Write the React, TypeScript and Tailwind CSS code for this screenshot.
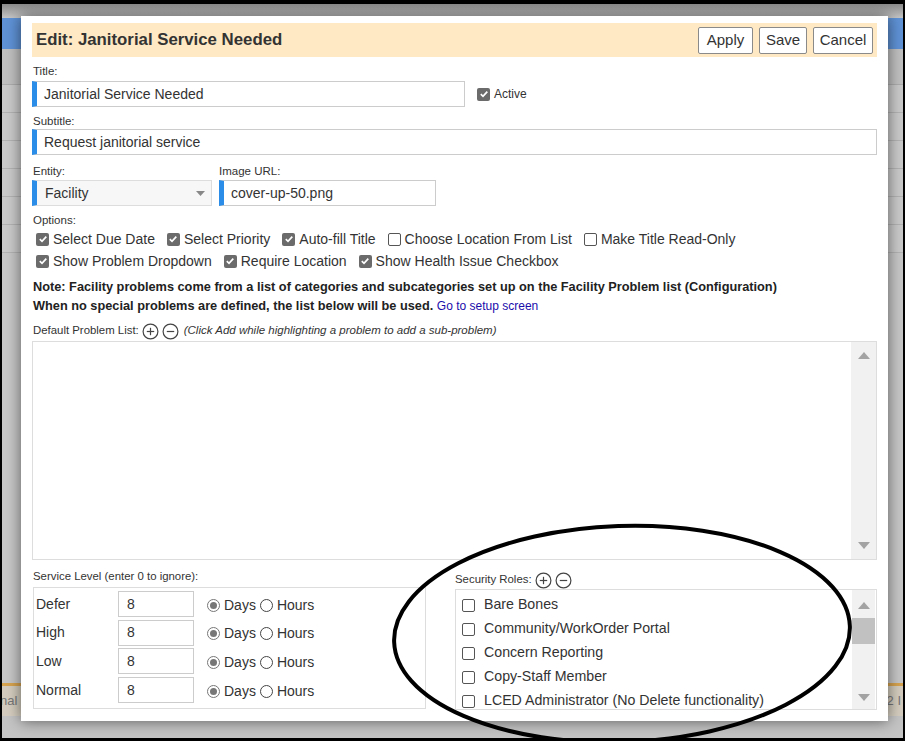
import React from "react";

const font = { fontFamily: '"Liberation Sans", Arial, sans-serif' };

const Check = ({ on }: { on: boolean }) =>
  on ? (
    <span className="inline-flex items-center justify-center w-[13px] h-[13px] rounded-[2px] bg-[#6b6b6b] shrink-0">
      <svg width="10" height="10" viewBox="0 0 10 10">
        <path d="M1.8 5.2 L4 7.3 L8.3 2.6" fill="none" stroke="#fff" strokeWidth="1.7" />
      </svg>
    </span>
  ) : (
    <span className="inline-block w-[13px] h-[13px] rounded-[2px] border border-[#555] bg-white shrink-0" />
  );

const Radio = ({ on }: { on: boolean }) =>
  on ? (
    <span className="inline-flex items-center justify-center w-[13px] h-[13px] rounded-full border border-[#777] bg-white shrink-0">
      <span className="w-[7px] h-[7px] rounded-full bg-[#777]" />
    </span>
  ) : (
    <span className="inline-block w-[13px] h-[13px] rounded-full border border-[#444] bg-white shrink-0" />
  );

const CircleIcon = ({ plus }: { plus: boolean }) => (
  <svg width="17" height="17" viewBox="0 0 17 17" className="shrink-0">
    <circle cx="8.5" cy="8.5" r="7.4" fill="none" stroke="#444" strokeWidth="1.2" />
    <path d="M4.8 8.5 H12.2" stroke="#444" strokeWidth="1.2" />
    {plus && <path d="M8.5 4.8 V12.2" stroke="#444" strokeWidth="1.2" />}
  </svg>
);

const Tri = ({ up }: { up: boolean }) => (
  <svg width="12" height="7" viewBox="0 0 12 7">
    <path d={up ? "M0 7 L6 0 L12 7 Z" : "M0 0 L12 0 L6 7 Z"} fill="#a3a3a3" />
  </svg>
);

const Opt = ({ on, label }: { on: boolean; label: string }) => (
  <label className="flex items-center gap-[4px] text-[14px] text-[#333]">
    <Check on={on} />
    <span>{label}</span>
  </label>
);

const levels = ["Defer", "High", "Low", "Normal"];
const roles = [
  "Bare Bones",
  "Community/WorkOrder Portal",
  "Concern Reporting",
  "Copy-Staff Member",
  "LCED Administrator (No Delete functionality)",
];

export default function App() {
  return (
    <div
      className="relative w-[905px] h-[741px] overflow-hidden border-black border-x-[2px] border-t-[4px] border-b-[3px] bg-[#c7c7c7]"
      style={font}
    >
      {/* greyed page behind */}
      <div className="flex flex-col h-full">
        <div className="h-[14px] bg-gradient-to-b from-[#8a8a8a] to-[#c6c6c6]" />
        <div className="h-[31px] bg-[#5f92d6]" />
        <div className="h-[36px] bg-[#c0c0c0] border-b border-[#adadad]" />
        {[0, 1, 2, 3, 4, 5].map((i) => (
          <div key={i} className="h-[28px] bg-[#cacaca] border-b border-[#b3b3b3]" />
        ))}
        <div className="flex-1" />
        <div className="h-[3px] bg-[#d7a450]" />
        <div className="h-[30px] bg-[#d4cdbf] flex items-center justify-between text-[13px] text-[#777]">
          <span className="-ml-[2px]">nal</span>
          <span className="mr-[2px]">22 I</span>
        </div>
        <div className="h-[22px] bg-[#c4c4c4]" />
      </div>

      {/* modal */}
      <div className="absolute left-[19px] top-[12px] w-[867px] h-[705px] bg-white shadow-[0_0_14px_rgba(0,0,0,0.55)] px-[11px] pt-[7px] text-[#333]">
        <div className="h-[34px] bg-[#fee9c4] flex items-center justify-between pl-[4px] pr-[4px]">
          <h1 className="text-[16.8px] font-bold text-[#333]">Edit: Janitorial Service Needed</h1>
          <div className="flex gap-[6px]">
            <button className="h-[27px] w-[55px] border border-[#8a8a8a] rounded-[2px] bg-white text-[15px] text-[#333]">Apply</button>
            <button className="h-[27px] w-[48px] border border-[#8a8a8a] rounded-[2px] bg-white text-[15px] text-[#333]">Save</button>
            <button className="h-[27px] w-[60px] border border-[#8a8a8a] rounded-[2px] bg-white text-[15px] text-[#333]">Cancel</button>
          </div>
        </div>

        <div className="text-[11.5px] mt-[7px] leading-[14px] pl-[1px]">Title:</div>
        <div className="flex items-start mt-[3px]">
          <div className="w-[433px] h-[26px] border border-[#ccc] border-l-[5px] border-l-[#2b8de8] flex items-center pl-[7px] text-[14px]">
            Janitorial Service Needed
          </div>
          <label className="flex items-center gap-[4px] ml-[12px] mt-[4px] text-[12px]">
            <Check on={true} />
            Active
          </label>
        </div>

        <div className="text-[11.5px] mt-[7px] leading-[14px] pl-[1px]">Subtitle:</div>
        <div className="h-[26px] mt-[1px] border border-[#ccc] border-l-[5px] border-l-[#2b8de8] flex items-center pl-[7px] text-[14px]">
          Request janitorial service
        </div>

        <div className="flex gap-[7px] mt-[9px]">
          <div className="flex flex-col">
            <div className="text-[11.5px] leading-[14px] pl-[1px]">Entity:</div>
            <div className="w-[180px] h-[26px] mt-[2px] bg-[#f7f7f7] border border-[#ddd] border-l-[5px] border-l-[#2b8de8] flex items-center justify-between pl-[8px] pr-[6px] text-[14px]">
              <span>Facility</span>
              <svg width="9" height="5" viewBox="0 0 9 5">
                <path d="M0 0 H9 L4.5 5 Z" fill="#888" />
              </svg>
            </div>
          </div>
          <div className="flex flex-col">
            <div className="text-[11.5px] leading-[14px]">Image URL:</div>
            <div className="w-[217px] h-[26px] mt-[2px] border border-[#ccc] border-l-[5px] border-l-[#2b8de8] flex items-center pl-[7px] text-[14px]">
              cover-up-50.png
            </div>
          </div>
        </div>

        <div className="text-[11.5px] mt-[7px] leading-[14px] pl-[1px]">Options:</div>
        <div className="flex gap-[12px] mt-[3px] pl-[4px] leading-[18px]">
          <Opt on label="Select Due Date" />
          <Opt on label="Select Priority" />
          <Opt on label="Auto-fill Title" />
          <Opt on={false} label="Choose Location From List" />
          <Opt on={false} label="Make Title Read-Only" />
        </div>
        <div className="flex gap-[12px] mt-[4px] pl-[4px] leading-[18px]">
          <Opt on label="Show Problem Dropdown" />
          <Opt on label="Require Location" />
          <Opt on label="Show Health Issue Checkbox" />
        </div>

        <div className="mt-[7px] text-[12.75px] font-bold leading-[19px] pl-[1px] text-[#222]">
          Note: Facility problems come from a list of categories and subcategories set up on the Facility Problem list (Configuration)
        </div>
        <div className="text-[12.75px] font-bold leading-[19px] pl-[1px] text-[#222]">
          When no special problems are defined, the list below will be used.{" "}
          <a className="font-normal text-[12px] text-[#1a0dab]">Go to setup screen</a>
        </div>

        <div className="flex items-center gap-[3px] mt-[6px] text-[11.4px] pl-[1px] h-[18px]">
          <span>Default Problem List:</span>
          <CircleIcon plus />
          <CircleIcon plus={false} />
          <span className="italic ml-[2px] text-[11.5px]">(Click Add while highlighting a problem to add a sub-problem)</span>
        </div>
        <div className="h-[219px] mt-[1px] border border-[#ddd] flex justify-end">
          <div className="w-[25px] h-full bg-[#f1f1f1] flex flex-col items-center justify-between py-[10px]">
            <Tri up />
            <Tri up={false} />
          </div>
        </div>

        <div className="flex mt-[5px]">
          <div className="w-[393px] ml-[1px] flex flex-col">
            <div className="text-[11.4px] leading-[14px] mt-[4px]">Service Level (enter 0 to ignore):</div>
            <div className="mt-[4px] h-[122px] border border-[#ddd] flex flex-col pt-[2px] pl-[2px]">
              {levels.map((l) => (
                <div key={l} className="flex items-center h-[28.6px] shrink-0 text-[14px]">
                  <span className="w-[82px]">{l}</span>
                  <div className="w-[76px] h-[26px] border border-[#ccc] flex items-center pl-[8px]">8</div>
                  <div className="flex items-center ml-[13px] gap-[4px] mt-[2px]">
                    <Radio on />
                    <span>Days</span>
                    <Radio on={false} />
                    <span>Hours</span>
                  </div>
                </div>
              ))}
            </div>
          </div>
          <div className="flex-1 ml-[29px] flex flex-col">
            <div className="flex items-center gap-[3px] text-[11.4px] h-[18px] mt-[6px]">
              <span>Security Roles:</span>
              <CircleIcon plus />
              <CircleIcon plus={false} />
            </div>
            <div className="mt-0 h-[121px] border border-[#ddd] flex">
              <div className="flex-1 flex flex-col pt-[3px] pl-[6px] overflow-hidden">
                {roles.map((r) => (
                  <label key={r} className="flex items-center gap-[9px] h-[24px] shrink-0 text-[14.2px]">
                    <Check on={false} />
                    <span>{r}</span>
                  </label>
                ))}
              </div>
              <div className="w-[23px] h-full bg-[#f1f1f1] flex flex-col items-center mr-[1px]">
                <div className="h-[28px] flex items-center justify-center pt-[2px]">
                  <Tri up />
                </div>
                <div className="w-full h-[26px] bg-[#c1c1c1]" />
                <div className="flex-1" />
                <div className="h-[24px] flex items-center justify-center">
                  <Tri up={false} />
                </div>
              </div>
            </div>
          </div>
        </div>
      </div>

      {/* hand-drawn annotation ellipse */}
      <svg className="absolute left-0 top-0 pointer-events-none" width="905" height="745" viewBox="0 0 905 745">
        <ellipse cx="620" cy="630" rx="228" ry="108" fill="none" stroke="#000" strokeWidth="4" transform="rotate(-2 620 630)" />
      </svg>
    </div>
  );
}
